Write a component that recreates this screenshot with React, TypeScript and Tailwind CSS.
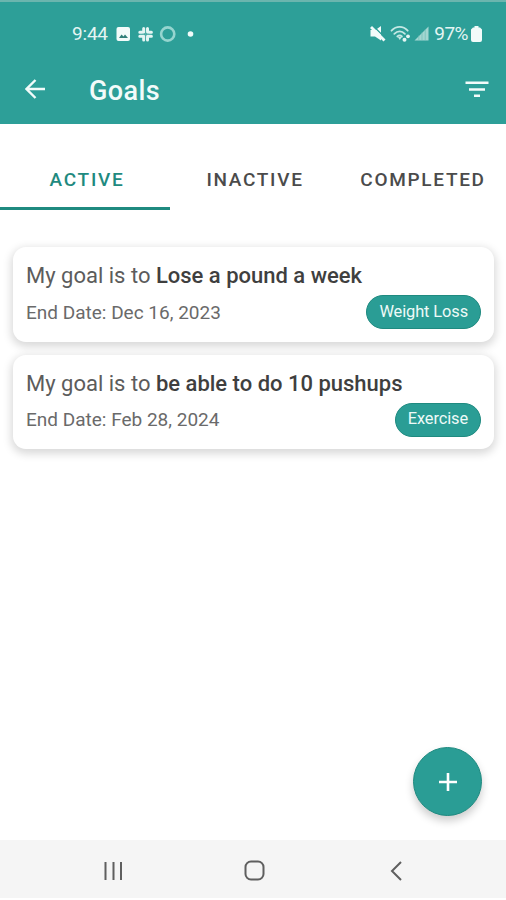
const tabs = ["Active", "Inactive", "Completed"];

const goals = [
    {
        title: "Lose a pound a week",
        endDate: "Dec 16, 2023",
        tag: "Weight Loss",
    },
    {
        title: "be able to do 10 pushups",
        endDate: "Feb 28, 2024",
        tag: "Exercise",
    },
];

const StatusBar = () => {
    return (
        <div className="flex h-16 items-center pr-6 pl-[72px] text-[#e4f5f3]">
            <span className="w-11 text-[19px] tracking-[-0.2px]">9:44</span>
            <svg width="126" height="18" viewBox="0 0 126 18" fill="none">
                {/* picture */}
                <rect x="0.5" y="2" width="13.5" height="14" rx="2" fill="#f2fbfa" />
                <path d="M3 13l2.5-3.5 2 2 1.5-2 3 3.5z" fill="#2f7f79" />
                {/* slack */}
                <g stroke="#e4f5f3" strokeWidth="3" strokeLinecap="round">
                    <path d="M27.7 3.5v3.5M23.8 7.2h3.7M31.5 3.5v3.5M31.7 7.2h3.7M23.8 11.2h3.7M27.7 11.2v3.7M31.5 11.2v3.7M31.7 11.2h3.7" />
                </g>
                <path d="M29.6 6v6.5M26.5 9.2h6.5" stroke="#5db5ae" strokeWidth="0.8" />
                {/* ring */}
                <circle cx="51.7" cy="9" r="6.6" stroke="#95d5cf" strokeWidth="2.6" />
                <circle cx="74.5" cy="9" r="2.8" fill="#f2fbfa" />
            </svg>
            <svg
                className="ml-auto"
                width="60"
                height="20"
                viewBox="0 0 60 20"
                fill="none"
            >
                {/* muted speaker */}
                <path d="M0.5 6h5l5.5-4v14.5L5 12.5H0.500z" fill="#f2fbfa" />
                <path d="M2.8 1.500l13 13" stroke="#2d9f98" strokeWidth="1.300" />
                <path d="M1 3l13.500 13.500" stroke="#f2fbfa" strokeWidth="2.800" />
                {/* wifi */}
                <g stroke="#c4e8e4" strokeWidth="1.8" strokeLinecap="round">
                    <path d="M21.5 6.700c4.800-5 11.500-5 16.200 0" />
                    <path d="M24.300 9.800c3.200-3.300 7.500-3.300 10.600 0" />
                    <path d="M27.300 12.500c1.500-1.400 3.200-1.400 4.600 0" />
                </g>
                <path d="M27.7 12.7h4.2l-2.1 3.3z" fill="#c4e8e4" />
                <circle cx="34.5" cy="15.700" r="2" fill="#e4f5f3" />
                <circle cx="38" cy="12.300" r="1.900" fill="#e4f5f3" />
                {/* signal */}
                <path d="M44.5 16.500L58.5 2.500v14z" fill="#a3d6d1" />
                <path
                    d="M48.800 11.500v5M52 8.500v8M55.200 5.500v11"
                    stroke="#6fbfb8"
                    strokeWidth="0.7"
                />
            </svg>
            <span className="ml-1 text-[19px] tracking-[-0.5px]">97%</span>
            <svg className="ml-[3px]" width="11" height="16" viewBox="0 0 11 16">
                <path
                    d="M3.5 0h4v1.500h1.500l2 2V14a2 2 0 0 1-2 2H2a2 2 0 0 1-2-2V3.500l2-2h1.500z"
                    fill="#f2fbfa"
                />
            </svg>
        </div>
    );
};

const Header = () => {
    return (
        <header className="h-[124px] border-t-2 border-[#6bb5ae] bg-[#2d9f98]">
            <StatusBar />
            <div className="flex h-[47px] items-center pr-[17px] pl-[25px] text-[#f2fbfa]">
                <svg className="-mt-px" width="21" height="20" viewBox="0 0 21 20" fill="none">
                    <path
                        d="M20 10H2M10.5 1L1.5 10l9 9"
                        stroke="currentColor"
                        strokeWidth="2.4"
                    />
                </svg>
                <h1 className="ml-[43px] pt-[3px] text-[27px] font-medium tracking-[0.4px]">
                    Goals
                </h1>
                <svg
                    className="ml-auto"
                    width="24"
                    height="17"
                    viewBox="0 0 24 17"
                    fill="none"
                >
                    <path
                        d="M0.5 1.8h23M4 8.4h16M9 14.8h6"
                        stroke="currentColor"
                        strokeWidth="2.5"
                    />
                </svg>
            </div>
        </header>
    );
};

export default function App() {
    return (
        <div className="flex h-[900px] w-[506px] flex-col overflow-hidden bg-white font-[Roboto,sans-serif]">
            <Header />
            <nav className="flex h-[86px]">
                {tabs.map((tab, i) => {
                    return (
                        <button
                            key={tab}
                            className={
                                i === 0
                                    ? "flex-1 border-b-3 border-[#1f8a80] pt-[30px] pl-1 text-[19px] font-medium tracking-[1.7px] text-[#1f8a80] uppercase"
                                    : "flex-1 border-b-3 border-transparent pt-[30px] pl-0.5 text-[19px] font-medium tracking-[1.7px] text-[#4b4b4b] uppercase"
                            }
                        >
                            {tab}
                        </button>
                    );
                })}
            </nav>
            <main className="flex flex-1 flex-col gap-[13px] pt-[37px] pr-3 pl-[13px]">
                {goals.map((goal) => {
                    return (
                        <article
                            key={goal.tag}
                            className="h-[94.5px] rounded-[13px] bg-white px-[13px] pt-[15px] shadow-[0_3px_9px_2px_rgba(0,0,0,0.15)]"
                        >
                            <h2 className="text-[22px] leading-7 whitespace-nowrap text-[#5c5c5c]">
                                My goal is to{" "}
                                <span className="font-medium text-[#3f3f3f]">
                                    {goal.title}
                                </span>
                            </h2>
                            <div className="mt-[5px] flex h-[34px] items-center justify-between">
                                <p className="pt-0.5 text-[19px] text-[#6a6a6a]">
                                    End Date: {goal.endDate}
                                </p>
                                <span className="flex h-[34px] items-center rounded-full border border-[#1f8a80] bg-[#2a9d95] px-3 text-[16.4px] tracking-[-0.1px] text-[#eefaf8]">
                                    {goal.tag}
                                </span>
                            </div>
                        </article>
                    );
                })}
                <button className="mt-auto mr-3 mb-6 flex size-[69px] items-center justify-center self-end rounded-full border border-[#1f8a80] bg-[#2a9d95] shadow-[0_5px_9px_rgba(0,0,0,0.2)]">
                    <svg width="18" height="18" viewBox="0 0 18 18">
                        <path d="M9 0v18M0 9h18" stroke="#fff" strokeWidth="2.6" />
                    </svg>
                </button>
            </main>
            <footer className="mb-0.5 flex h-[58px] items-center bg-[#f5f5f5] pt-[3px] pl-[104px] text-[#5f5f5f]">
                <svg width="20" height="20" viewBox="0 0 20 20">
                    <path
                        d="M1.5 1v18M9.5 1v18M17 1v18"
                        stroke="currentColor"
                        strokeWidth="2"
                    />
                </svg>
                <svg
                    className="ml-[120px]"
                    width="21"
                    height="21"
                    viewBox="0 0 21 21"
                    fill="none"
                >
                    <rect
                        x="1.5"
                        y="1.5"
                        width="18"
                        height="18"
                        rx="5.5"
                        stroke="currentColor"
                        strokeWidth="2"
                    />
                </svg>
                <svg
                    className="ml-[125px]"
                    width="12"
                    height="20"
                    viewBox="0 0 12 20"
                    fill="none"
                >
                    <path
                        d="M11 1L2 10l9 9"
                        stroke="currentColor"
                        strokeWidth="2"
                    />
                </svg>
            </footer>
        </div>
    );
}
